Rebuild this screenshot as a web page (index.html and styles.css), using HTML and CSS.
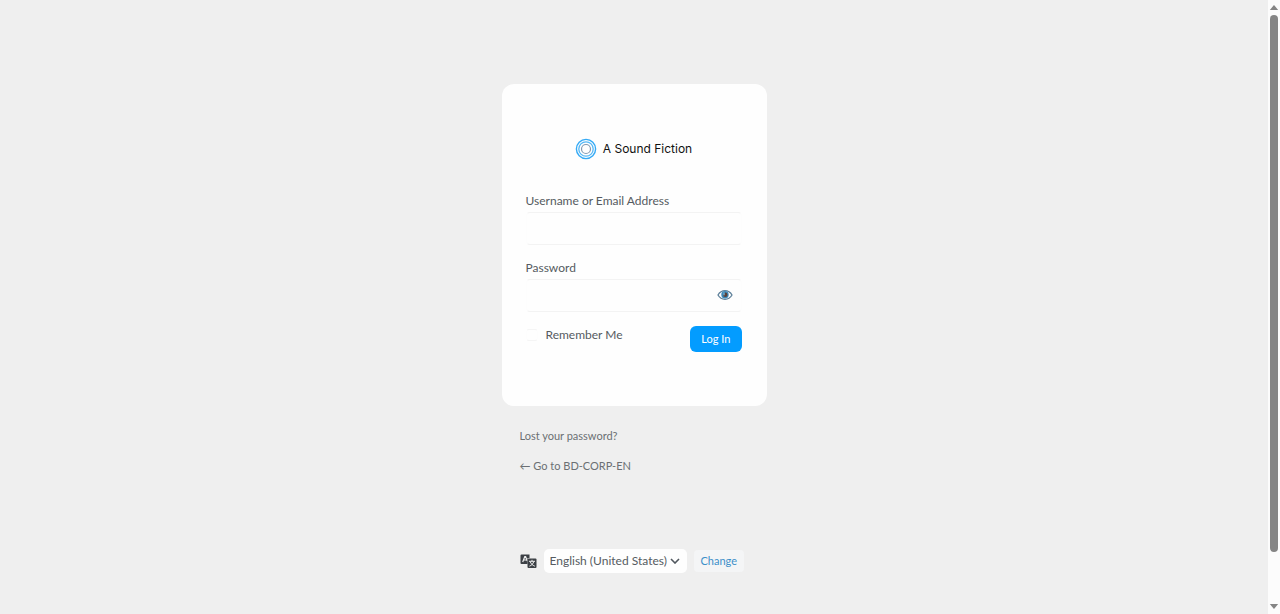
FILE: index.html
```html
<!DOCTYPE html>
<html lang="en">
<head>
    <meta charset="UTF-8">
    <meta name="viewport" content="width=device-width, initial-scale=1.0">
    <title>Log In - A Sound Fiction</title>
    <link rel="stylesheet" href="styles.css">
</head>
<body>
    <main class="page">
        <div class="login">
            <form class="card">
                <h1 class="logo">
                    <svg class="logo-mark" viewBox="0 0 22 22" fill="none" aria-hidden="true">
                        <circle cx="11" cy="11" r="9.6" stroke="#35aaf5" stroke-width="1.4"/>
                        <circle cx="11" cy="11" r="7.2" stroke="#55b8f6" stroke-width="1.3"/>
                        <circle cx="11" cy="11" r="4.5" stroke="#8499b0" stroke-width="1.2"/>
                    </svg>
                    <span>A Sound Fiction</span>
                </h1>
                <div class="field">
                    <label for="user">Username or Email Address</label>
                    <input class="text" type="text" id="user">
                </div>
                <div class="field">
                    <label for="pass">Password</label>
                    <div class="password">
                        <input class="text" type="password" id="pass">
                        <button class="show" type="button" aria-label="Show password">
                            <svg viewBox="0 0 16 12" fill="none" aria-hidden="true">
                                <path d="M1 6C3 2.600 5.300 1.700 8 1.700S13 2.600 15 6C13 9.400 10.700 10.300 8 10.300S3 9.400 1 6Z" stroke="#5c7f99" stroke-width="1.3"/>
                                <circle cx="8" cy="5.8" r="3.7" fill="#3c87b8"/>
                                <circle cx="8.3" cy="5.8" r="2.200" fill="#5b4038"/>
                                <path d="M7 3.500v2.800" stroke="#75c5f2" stroke-width="1.2"/>
                            </svg>
                        </button>
                    </div>
                </div>
                <div class="actions">
                    <div class="remember">
                        <input type="checkbox" id="remember">
                        <label for="remember">Remember Me</label>
                    </div>
                    <button class="submit" type="submit">Log In</button>
                </div>
            </form>
            <nav class="links">
                <a href="#">Lost your password?</a>
                <a href="#">← Go to BD-CORP-EN</a>
            </nav>
            <form class="language">
                <label for="locale" aria-label="Language">
                    <svg class="translate" viewBox="0 0 17 15" aria-hidden="true">
                        <path d="M1.500 0.500h8v3.500h-2v6h-6a1 1 0 0 1-1-1v-7.500a1 1 0 0 1 1-1z" fill="#3c4045"/>
                        <path d="M2.700 8L4.800 2.500h.8L7.200 7M3.500 6h3" stroke="#efefef" stroke-width="1.200" fill="none"/>
                        <rect x="7.500" y="4.500" width="9" height="9.500" rx="1" fill="#3c4045"/>
                        <path d="M9 7.300h6M12 5.800v1.500M13.800 7.500C13.200 9.700 11.500 11.400 9.400 12.200M10.200 7.700c.8 2 2.300 3.600 4.600 4.500" stroke="#efefef" stroke-width="1" fill="none"/>
                    </svg>
                </label>
                <div class="select">
                    <select id="locale">
                        <option>English (United States)</option>
                    </select>
                    <svg class="arrow" viewBox="0 0 10 6" fill="none" aria-hidden="true">
                        <path d="M1 1l4 4 4-4" stroke="#50575e" stroke-width="1.600"/>
                    </svg>
                </div>
                <button class="change" type="submit">Change</button>
            </form>
        </div>
    </main>
    <div class="scrollbar" aria-hidden="true">
        <svg viewBox="0 0 10 6"><path d="M5 0l5 6H0z" fill="#858585"/></svg>
        <div class="track"><div class="thumb"></div></div>
        <svg viewBox="0 0 10 6"><path d="M0 0h10L5 6z" fill="#858585"/></svg>
    </div>
</body>
</html>
```

FILE: styles.css
```css
* { box-sizing: border-box; }
body {
    margin: 0;
    display: flex;
    min-height: 100vh;
    background: #efefef;
    color: #555b61;
    font: 12px/18px Lato, "Open Sans", sans-serif;
}
button, input, select {
    margin: 0;
    font: inherit;
    color: inherit;
}
button { cursor: pointer; }
svg { display: block; }

.page {
    flex: 1;
    display: flex;
    justify-content: center;
    align-items: flex-start;
    padding: 84px 0 40px;
}
.login {
    width: 265px;
}
.card {
    display: flex;
    flex-direction: column;
    gap: 14px;
    padding: 54px 25px 54px 24px;
    background: #fefefe;
    border-radius: 12px;
}
.logo {
    display: flex;
    align-items: center;
    justify-content: center;
    gap: 6px;
    margin: 0 0 18px;
    color: #111;
    font: 400 12px/22px Inter, sans-serif;
}
.logo-mark {
    width: 22px;
    height: 22px;
}

.field {
    display: flex;
    flex-direction: column;
    gap: 2px;
}
.text {
    width: 100%;
    height: 33px;
    padding: 0 8px;
    background: #fefefe;
    border: 1px solid #f3f3f3;
    border-color: #f3f3f3 #fdfdfd;
    border-radius: 4px;
}
.password { position: relative; }
.show {
    position: absolute;
    top: 0;
    right: 0;
    display: flex;
    align-items: center;
    justify-content: center;
    width: 33px;
    height: 32px;
    padding: 0;
    background: none;
    border: 0;
}
.show svg {
    width: 16px;
    height: 12px;
}

.actions {
    display: flex;
    justify-content: space-between;
    align-items: flex-start;
}
.remember {
    display: flex;
    align-items: center;
    gap: 8px;
}
.remember input {
    appearance: none;
    width: 12px;
    height: 12px;
    border: 1px solid #f5f5f5;
    border-color: #f5f5f5 #fdfdfd;
    border-radius: 3px;
}
.submit {
    height: 26px;
    padding: 0 11px;
    color: #fff;
    background: #039cff;
    border: 0;
    border-radius: 6px;
    font-size: 11px;
}

.links {
    display: flex;
    flex-direction: column;
    align-items: flex-start;
    gap: 14px;
    padding: 22px 18px 75px;
    font-size: 11px;
    line-height: 16px;
}
.links a {
    color: #6b6f73;
    text-decoration: none;
}

.language {
    display: flex;
    align-items: center;
    gap: 7px;
    padding-left: 18px;
}
.translate {
    width: 17px;
    height: 15px;
}
.select { position: relative; }
.select select {
    appearance: none;
    height: 24px;
    padding: 0 19px 0 6px;
    background: #fefefe;
    border: 0;
    border-radius: 5px;
}
.arrow {
    position: absolute;
    top: 9px;
    right: 7px;
    width: 10px;
    height: 6px;
    pointer-events: none;
}
.change {
    height: 22px;
    padding: 0 7px;
    color: #3d8fc9;
    background: #f4f5f6;
    border: 0;
    border-radius: 4px;
    font-size: 11px;
}

.scrollbar {
    display: flex;
    flex-direction: column;
    align-items: center;
    gap: 5px;
    width: 12px;
    height: 100vh;
    padding: 5px 1px;
    background: #fcfcfc;
}
.scrollbar svg {
    width: 10px;
    height: 5px;
}
.track { flex: 1; }
.thumb {
    width: 8px;
    height: 92%;
    background: #858585;
    border-radius: 4px;
}
```
